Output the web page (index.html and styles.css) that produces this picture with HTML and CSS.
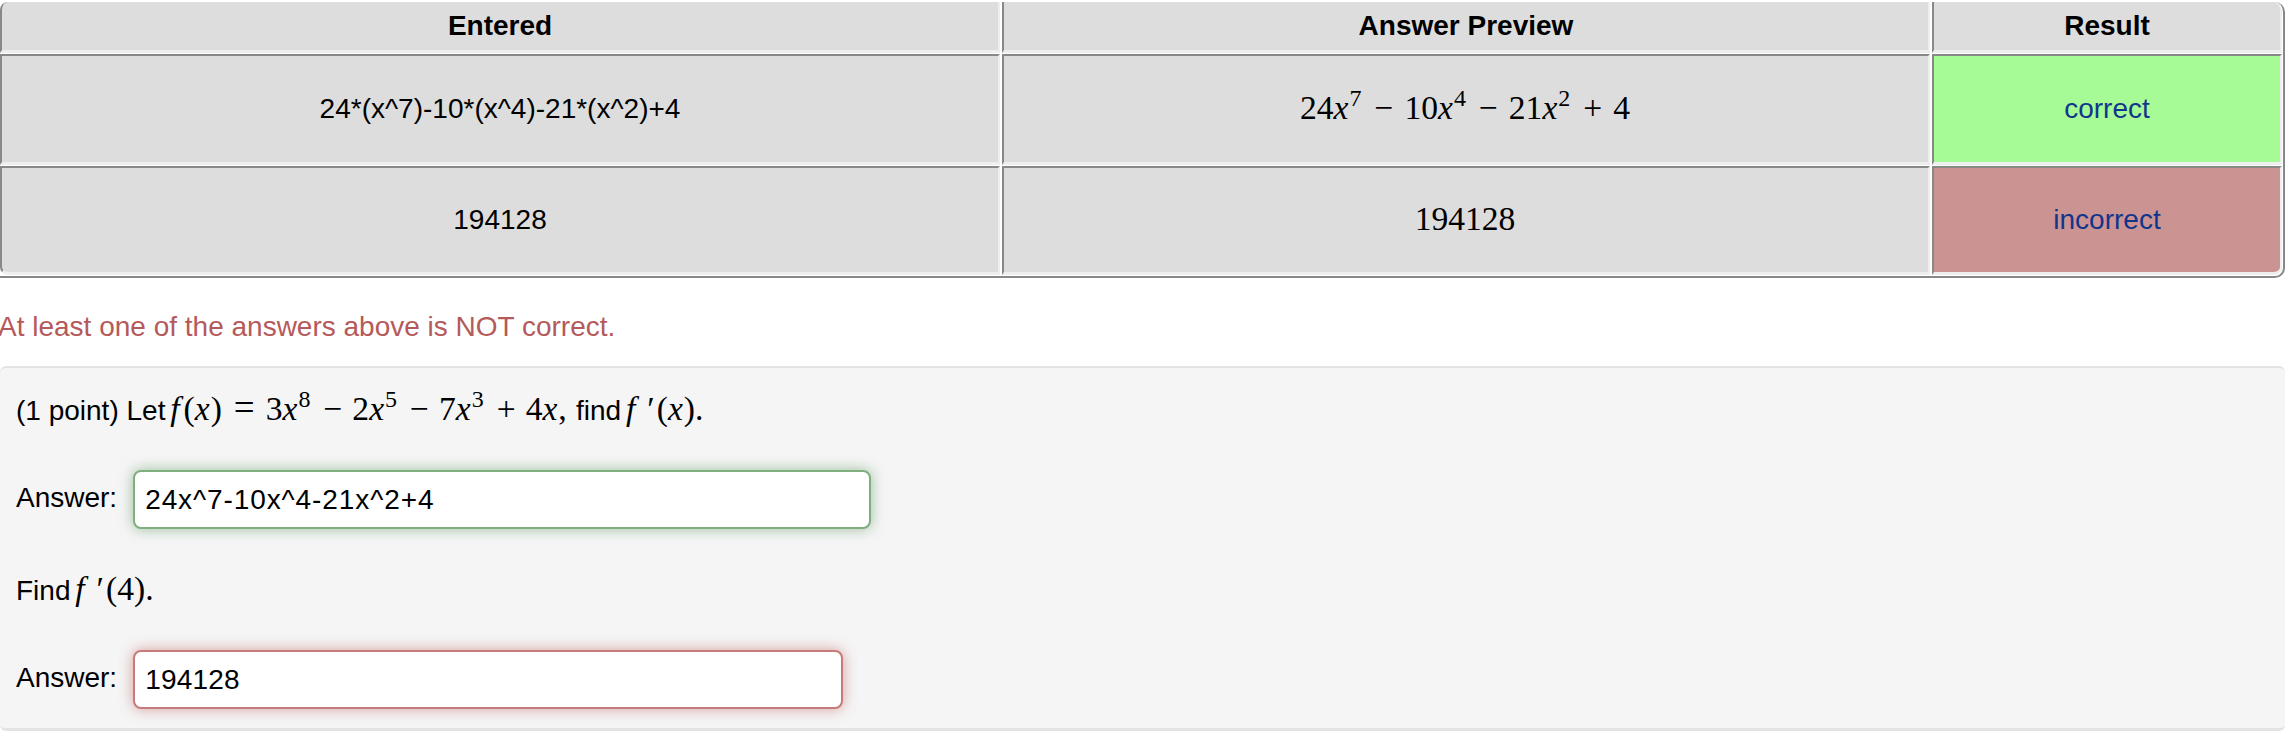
FILE: index.html
```html
<!DOCTYPE html>
<html lang="en">
<head>
<meta charset="utf-8">
<title>Attempt results</title>
<link rel="stylesheet" href="styles.css">
</head>
<body>
<div class="results">
  <div class="cell head">Entered</div>
  <div class="cell head">Answer Preview</div>
  <div class="cell head">Result</div>

  <div class="cell">24*(x^7)-10*(x^4)-21*(x^2)+4</div>
  <div class="cell math"><span class="expr">24<i>x</i><sup>7</sup><span class="op">−</span>10<i>x</i><sup>4</sup><span class="op">−</span>21<i>x</i><sup>2</sup><span class="op">+</span>4</span></div>
  <div class="cell ok">correct</div>

  <div class="cell">194128</div>
  <div class="cell math"><span class="expr">194128</span></div>
  <div class="cell bad">incorrect</div>
</div>

<p class="warning">At least one of the answers above is NOT correct.</p>

<div class="problem">
  <p class="line first">(1 point) Let <span class="expr"><i class="f">f</i>(<i>x</i>)<span class="rel">=</span>3<i>x</i><sup>8</sup><span class="op">−</span>2<i>x</i><sup>5</sup><span class="op">−</span>7<i>x</i><sup>3</sup><span class="op">+</span>4<i>x</i><span class="comma">,</span></span> find <span class="expr"><i class="f">f</i><span class="prime">′</span>(<i>x</i>).</span></p>
  <div class="answer first-answer">
    <label for="a1">Answer:</label>
    <input id="a1" class="field good wide" type="text" value="24x^7-10x^4-21x^2+4">
  </div>
  <p class="line second">Find <span class="expr"><i class="f">f</i><span class="prime">′</span>(4).</span></p>
  <div class="answer second-answer">
    <label for="a2">Answer:</label>
    <input id="a2" class="field wrong narrow" type="text" value="194128">
  </div>
</div>
</body>
</html>
```
FILE: styles.css
```css
* { box-sizing: border-box; }
html, body { margin: 0; padding: 0; background: #fff; }
body {
  width: 2285px;
  height: 736px;
  overflow: hidden;
  padding-top: 2px;
  font-family: "Liberation Sans", Arial, sans-serif;
  font-size: 28px;
  color: #000;
}

.results {
  display: grid;
  grid-template-columns: 1000px 928px 350px;
  grid-template-rows: 51px 111px 109px;
  column-gap: 2px;
  row-gap: 1px;
  width: 2285px;
  padding: 0 1px 1px 0;
  border-right: 2px solid #888;
  border-bottom: 2px solid #888;
  border-bottom-right-radius: 10px;
  border-top-right-radius: 10px;
}
.cell {
  display: flex;
  align-items: center;
  justify-content: center;
  background: #ddd;
  border-style: solid;
  border-width: 2px 2px 3px 2px;
  border-color: #888 #eee #eee #888;
}
.head { font-weight: 700; border-top-width: 0; }
.head:first-child { border-top-left-radius: 8px; }
.head:nth-child(3) { border-top-right-radius: 8px; }
.cell:nth-child(7) { border-bottom-left-radius: 8px; }
.cell:nth-child(9) { border-bottom-right-radius: 8px; }
.ok  { background: #a6fb96; color: #12358c; }
.bad { background: #cc9393; color: #12358c; }
.math { padding-right: 2px; }
.math .expr { margin-top: -2px; }
.math .op { margin-right: 11px; }

.expr {
  font-family: "Liberation Serif", "Times New Roman", serif;
  font-size: 33.6px;
}
.expr i { margin-right: 1px; }
.expr i.f { margin: 0 4px 0 -3px; }
.expr sup { font-size: 24px; line-height: 0; vertical-align: 13px; }
.op { margin: 0 10px 0 13px; }
.rel { margin: 0 11px 0 12px; font-size: 37px; }
.comma { margin-right: 1.5px; }
.prime { font-size: 34px; margin: 0 2px 0 8px; }

.warning {
  margin: 0 0 0 -2px;
  padding-top: 31px;
  height: 88px;
  line-height: 36px;
  color: #b55a5a;
  white-space: nowrap;
}

.problem {
  height: 365px;
  background: #f5f5f5;
  border: solid #e3e3e3;
  border-width: 2px 0 3px 0;
  border-radius: 6px;
  padding: 0 16px;
}
.line { margin: 0; line-height: 40px; white-space: nowrap; }
.first { padding-top: 20px; height: 60px; }
.answer { display: flex; align-items: center; gap: 16px; height: 59px; }
.answer label { position: relative; top: -2px; }
.first-answer { margin-top: 42px; }
.second { margin-top: 40px; height: 40px; line-height: 40px; }
.second-answer { margin-top: 41px; }
.field {
  height: 59px;
  padding: 0 10px;
  font: inherit;
  font-kerning: none;
  letter-spacing: .2px;
  color: #000;
  background: #fff;
  border-radius: 8px;
  border: 2px solid;
  outline: none;
}
.wide { width: 738px; letter-spacing: .9px; }
.narrow { width: 710px; }
.good { border-color: #7fae7f; box-shadow: 0 0 14px rgba(70,136,71,.5); }
.wrong { border-color: #c77a7a; box-shadow: 0 0 14px rgba(185,74,72,.5); }
```
